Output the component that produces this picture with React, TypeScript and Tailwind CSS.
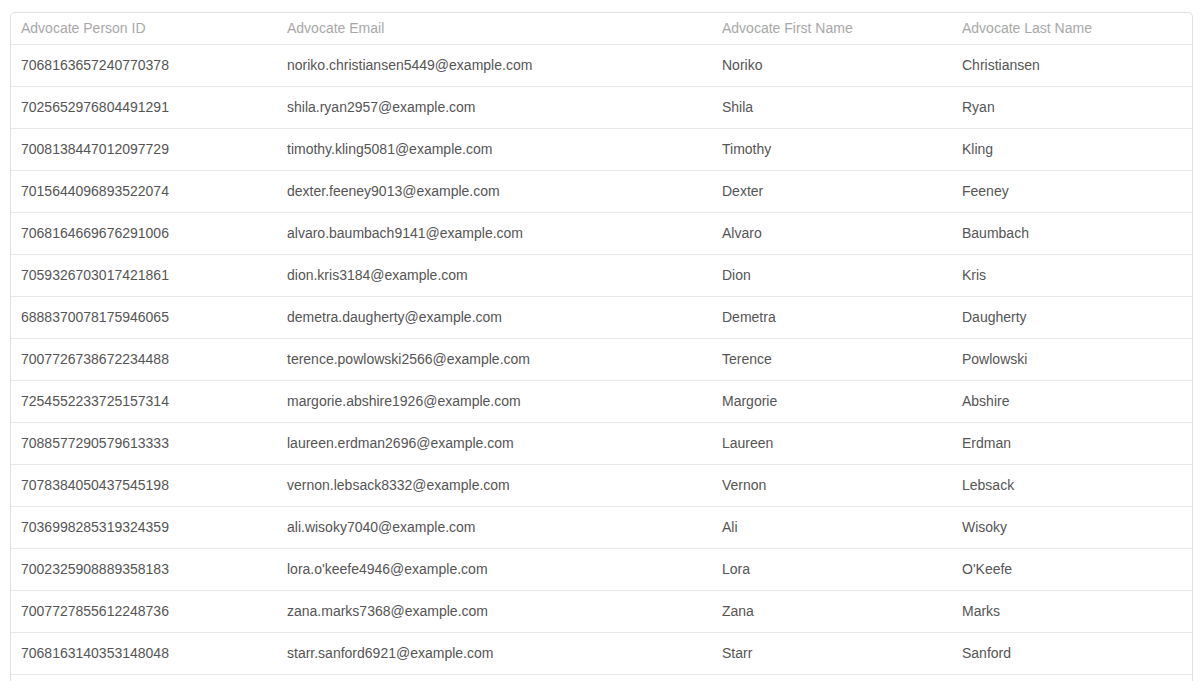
import React from 'react';

const rows = [
  ['7068163657240770378', 'noriko.christiansen5449@example.com', 'Noriko', 'Christiansen'],
  ['7025652976804491291', 'shila.ryan2957@example.com', 'Shila', 'Ryan'],
  ['7008138447012097729', 'timothy.kling5081@example.com', 'Timothy', 'Kling'],
  ['7015644096893522074', 'dexter.feeney9013@example.com', 'Dexter', 'Feeney'],
  ['7068164669676291006', 'alvaro.baumbach9141@example.com', 'Alvaro', 'Baumbach'],
  ['7059326703017421861', 'dion.kris3184@example.com', 'Dion', 'Kris'],
  ['6888370078175946065', 'demetra.daugherty@example.com', 'Demetra', 'Daugherty'],
  ['7007726738672234488', 'terence.powlowski2566@example.com', 'Terence', 'Powlowski'],
  ['7254552233725157314', 'margorie.abshire1926@example.com', 'Margorie', 'Abshire'],
  ['7088577290579613333', 'laureen.erdman2696@example.com', 'Laureen', 'Erdman'],
  ['7078384050437545198', 'vernon.lebsack8332@example.com', 'Vernon', 'Lebsack'],
  ['7036998285319324359', 'ali.wisoky7040@example.com', 'Ali', 'Wisoky'],
  ['7002325908889358183', "lora.o'keefe4946@example.com", 'Lora', "O'Keefe"],
  ['7007727855612248736', 'zana.marks7368@example.com', 'Zana', 'Marks'],
  ['7068163140353148048', 'starr.sanford6921@example.com', 'Starr', 'Sanford'],
];

const headers = ['Advocate Person ID', 'Advocate Email', 'Advocate First Name', 'Advocate Last Name'];

export default function App() {
  return (
    <div className="bg-white min-h-screen pt-3 px-[10px] font-['Liberation_Sans',Arial,sans-serif]">
      <div className="border border-[#e0e0e0] rounded-[5px] overflow-hidden">
        <table className="w-full table-fixed border-collapse text-[14px]">
          <colgroup>
            <col className="w-[266px]" />
            <col className="w-[435px]" />
            <col className="w-[240px]" />
            <col />
          </colgroup>
          <thead>
            <tr className="h-[31px] border-b border-[#e6e6e6]">
              {headers.map((h) => (
                <th key={h} className="text-left font-normal text-[#a8a8a8] pl-[10px] align-middle">
                  {h}
                </th>
              ))}
            </tr>
          </thead>
          <tbody>
            {rows.map((r) => (
              <tr key={r[0]} className="h-[42px] border-b border-[#e9e9e9]">
                {r.map((c, i) => (
                  <td key={i} className="pl-[10px] text-[#555555] align-middle whitespace-nowrap">
                    {c}
                  </td>
                ))}
              </tr>
            ))}
          </tbody>
        </table>
        <div className="h-[40px]" />
      </div>
    </div>
  );
}
